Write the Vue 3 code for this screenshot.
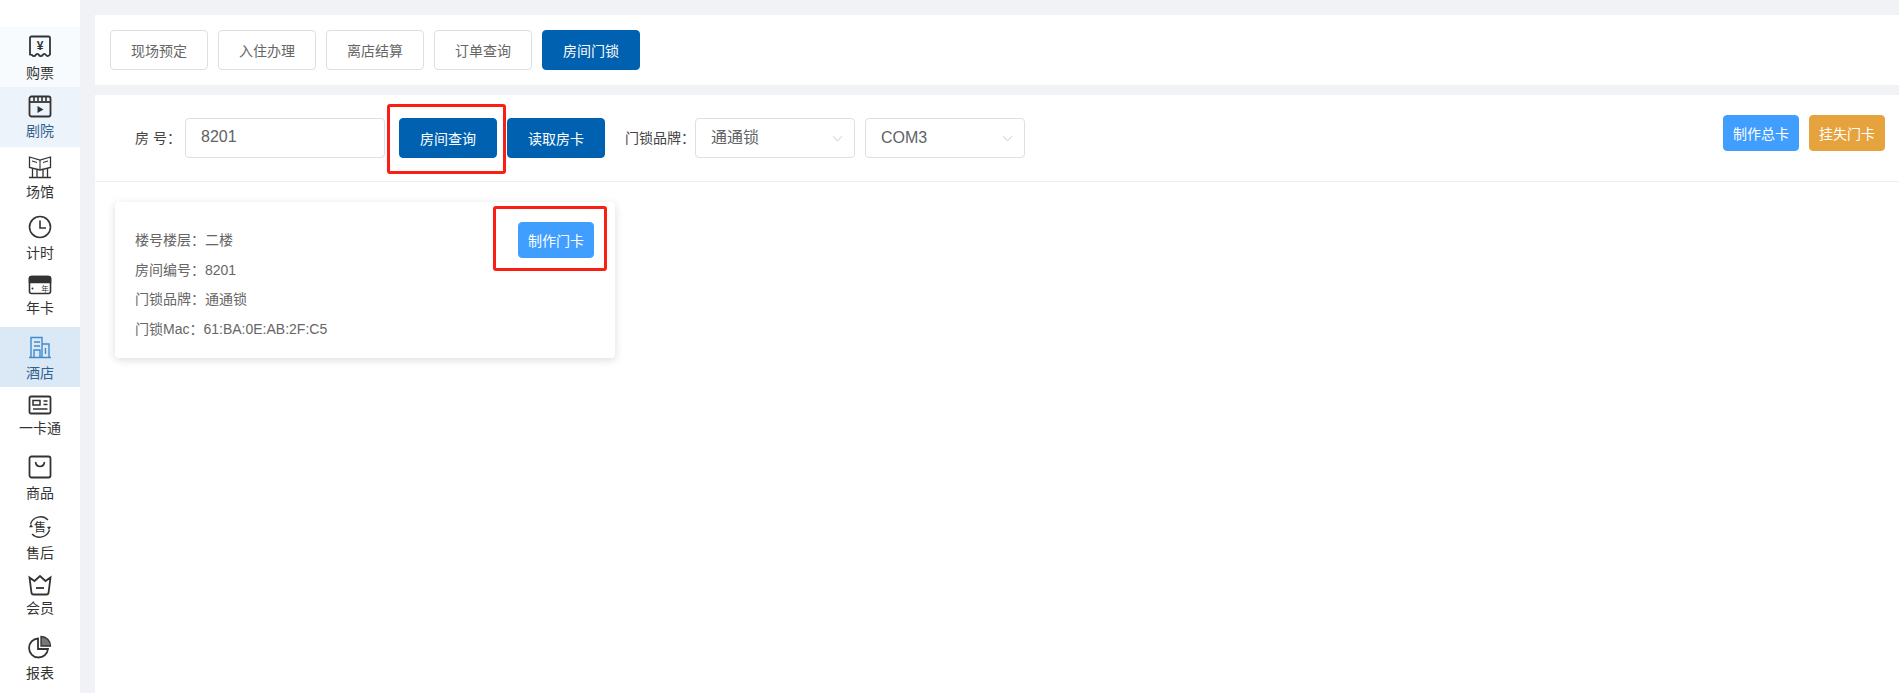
<script setup>
const nav = [
  { label: '购票', icon: 'ticket', drop: 4, tone: 'soft' },
  { label: '剧院', icon: 'film', drop: 2, tone: 'mid' },
  { label: '场馆', icon: 'venue', drop: 3, tone: '' },
  { label: '计时', icon: 'clock', drop: 4, tone: '' },
  { label: '年卡', icon: 'card', drop: -1, tone: '' },
  { label: '酒店', icon: 'hotel', drop: 4, tone: 'active' },
  { label: '一卡通', icon: 'idcard', drop: -1, tone: '' },
  { label: '商品', icon: 'bag', drop: 4, tone: '' },
  { label: '售后', icon: 'after', drop: 4, tone: '' },
  { label: '会员', icon: 'crown', drop: -1, tone: '' },
  { label: '报表', icon: 'pie', drop: 4, tone: '' }
]
const tabs = ['现场预定', '入住办理', '离店结算', '订单查询', '房间门锁']
</script>

<template>
  <div class="page">
    <aside class="side">
      <div
        v-for="item in nav"
        :key="item.label"
        class="nav-item"
        :class="item.tone"
      >
        <svg class="ico" viewBox="0 0 24 24" fill="none" stroke="currentColor" stroke-width="1.6">
          <template v-if="item.icon === 'ticket'">
            <path d="M2 3a1.500 1.500 0 0 1 1.500-1.500h17A1.500 1.500 0 0 1 22 3v16.500c-1.500 2-3 2-4 .5s-2.500-1.500-3.300 0-3 1.500-3.700 0-2.500-1.500-3.300 0-2.700 1.500-3.700 0L2 19.500z" stroke-width="1.800" />
            <text class="glyph bold" x="12" y="15" font-size="12" text-anchor="middle">¥</text>
          </template>
          <template v-else-if="item.icon === 'film'">
            <rect x="1.500" y="1.500" width="21" height="20" rx="2" stroke-width="1.800" />
            <path d="M1.500 7h21" stroke-width="1.800" />
            <path d="M6 2v4M10 2v4M14 2v4M18 2v4" stroke-width="1.600" />
            <path d="M9.500 11l6 3.500-6 3.500z" fill="currentColor" stroke="none" />
          </template>
          <template v-else-if="item.icon === 'venue'">
            <path d="M1.500 2l10.500 3 10.500-3v10.500L12 15 1.500 12.500z" stroke-width="1.300" />
            <path d="M12 5v10M4 6l5 1.500M15 7.500L20 6" stroke-width="1.100" />
            <path d="M4.500 13v9M9 15v7M15 15v7M19.500 13v9M1 22.500h22" stroke-width="1.300" />
          </template>
          <template v-else-if="item.icon === 'clock'">
            <circle cx="12" cy="12" r="10.500" />
            <path d="M12 5.500V13h6" />
          </template>
          <template v-else-if="item.icon === 'card'">
            <rect x="1.500" y="1.500" width="21" height="17" rx="2" />
            <path d="M1.500 3a2 2 0 0 1 2-1.500h17a2 2 0 0 1 2 1.500v4.500h-21z" fill="currentColor" />
            <circle cx="4.500" cy="13.500" r="1" fill="currentColor" stroke="none" />
            <text class="glyph" x="17" y="16.500" font-size="7.500" text-anchor="middle">年</text>
          </template>
          <template v-else-if="item.icon === 'hotel'">
            <path d="M3 22V2.500h11V22M14 9h7v13M1 22.500h22" stroke-width="1.400" />
            <path d="M6 7h6M6 11h6M6 22v-7h6v7M17.500 13v6" stroke-width="1.400" />
          </template>
          <template v-else-if="item.icon === 'idcard'">
            <rect x="1.500" y="1.500" width="21" height="17" rx="1.500" stroke-width="1.800" />
            <rect x="5" y="5.500" width="7" height="4.500" stroke-width="1.500" />
            <path d="M15.500 6h4M15.500 9.500h4M5 14h14.500" stroke-width="1.700" />
          </template>
          <template v-else-if="item.icon === 'bag'">
            <path d="M3.500 1.500h17a2 2 0 0 1 2 2v17a2 2 0 0 1-2 2h-17a2 2 0 0 1-2-2v-17a2 2 0 0 1 2-2z" stroke-width="1.800" />
            <path d="M7.500 7c.5 3 2.300 4.500 4.500 4.500S16 10 16.500 7" stroke-width="1.600" />
          </template>
          <template v-else-if="item.icon === 'after'">
            <path d="M2.500 9A10.500 10.500 0 0 1 20 5M21.500 15A10.500 10.500 0 0 1 4 19" stroke-width="1.300" />
            <path d="M1.500 12L3 9.500 4.500 12zM22.500 12L21 14.500 19.500 12z" fill="currentColor" stroke-width=".6" />
            <text class="glyph" x="12" y="16.500" font-size="12" text-anchor="middle">售</text>
          </template>
          <template v-else-if="item.icon === 'crown'">
            <path d="M1.500 2.500l5 3.500L12 1l5.500 5 5-3.500-2 15.500a2 2 0 0 1-2 1.500h-13a2 2 0 0 1-2-1.500z" stroke-width="1.800" />
            <path d="M8 13h8" stroke-width="1.800" />
          </template>
          <template v-else>
            <path d="M10 3.500a9.500 9.500 0 1 0 10 10.500H10z" stroke-width="1.800" />
            <path d="M13 1.500a9.500 9.500 0 0 1 9.500 9.500H13z" fill="#777" stroke-width="1.300" />
          </template>
        </svg>
        <span class="nav-label" :style="{ marginTop: item.drop + 'px' }">{{ item.label }}</span>
      </div>
    </aside>

    <main class="main">
      <section class="tabs">
        <button
          v-for="(tab, i) in tabs"
          :key="tab"
          class="btn tab"
          :class="{ primary: i === 4 }"
        >{{ tab }}</button>
      </section>

      <section class="panel">
        <header class="toolbar">
          <span class="label room-label">房 号：</span>
          <div class="field room-field">8201</div>
          <span class="mark mark-query"><button class="btn primary wide">房间查询</button></span>
          <button class="btn primary wide read">读取房卡</button>
          <span class="label brand-label">门锁品牌：</span>
          <div class="field select">
            <span>通通锁</span>
            <svg class="chev" viewBox="0 0 12 7" fill="none" stroke="currentColor"><path d="M1 1l5 5 5-5" /></svg>
          </div>
          <div class="field select">
            <span>COM3</span>
            <svg class="chev" viewBox="0 0 12 7" fill="none" stroke="currentColor"><path d="M1 1l5 5 5-5" /></svg>
          </div>
          <div class="actions">
            <button class="btn small blue">制作总卡</button>
            <button class="btn small orange">挂失门卡</button>
          </div>
        </header>

        <div class="body">
          <article class="room-card">
            <div class="lines">
              <div>楼号楼层：二楼</div>
              <div>房间编号：8201</div>
              <div>门锁品牌：通通锁</div>
              <div>门锁Mac：61:BA:0E:AB:2F:C5</div>
            </div>
            <span class="mark mark-card"><button class="btn small blue">制作门卡</button></span>
          </article>
        </div>
      </section>
    </main>
  </div>
</template>

<style>
html, body { margin: 0; background: #f0f2f6; overflow: hidden; }
</style>

<style scoped>
.page {
  display: flex;
  width: 1899px;
  height: 693px;
  overflow: hidden;
  background: #f0f2f6;
  font-family: "Liberation Sans", "Noto Sans CJK SC", sans-serif;
}
.side {
  width: 80px;
  flex: none;
  padding-top: 27px;
  box-sizing: border-box;
  background: #fff;
}
.nav-item {
  height: 60px;
  box-sizing: border-box;
  display: flex;
  flex-direction: column;
  align-items: center;
  padding-top: 8px;
  color: #333;
}
.nav-item.soft { background: #f7fbfe; }
.nav-item.mid { background: #ecf3fa; }
.nav-item.active { background: #dbe8f6; }
.nav-item.active .ico { color: #3f8ccb; }
.nav-item.active .nav-label,
.nav-item.mid .nav-label { color: #33618f; }
.ico { width: 24px; height: 24px; flex: none; }
.glyph { fill: currentColor; stroke: none; }
.glyph.bold { font-weight: 700; }
.nav-label { font-size: 14px; line-height: 20px; white-space: nowrap; }

.main {
  flex: 1;
  margin-left: 15px;
  padding-top: 15px;
  display: flex;
  flex-direction: column;
  gap: 10px;
  min-width: 0;
}
.tabs {
  height: 70px;
  box-sizing: border-box;
  padding: 15px;
  display: flex;
  gap: 10px;
  background: #fff;
}
.btn {
  box-sizing: border-box;
  border: 1px solid transparent;
  border-radius: 4px;
  padding: 0;
  font-family: inherit;
  font-size: 14px;
  white-space: nowrap;
}
.tab {
  width: 98px;
  height: 40px;
  border-color: #dcdfe6;
  background: #fff;
  color: #666;
}
.btn.primary {
  background: #0061b0;
  border-color: #0061b0;
  color: #fff;
}
.panel { flex: 1; background: #fff; }
.toolbar {
  height: 87px;
  box-sizing: border-box;
  border-bottom: 1px solid #eeeff2;
  padding: 23px 14px 0 0;
  display: flex;
  align-items: flex-start;
}
.label {
  font-size: 14px;
  line-height: 40px;
  color: #444;
  white-space: nowrap;
}
.room-label { margin-left: 40px; width: 50px; }
.brand-label { margin-left: 20px; width: 70px; }
.field {
  box-sizing: border-box;
  height: 40px;
  border: 1px solid #dcdfe6;
  border-radius: 4px;
  line-height: 36px;
  color: #606266;
  font-size: 16px;
}
.room-field { width: 200px; padding-left: 15px; }
.wide { width: 98px; height: 40px; flex: none; }
.read { margin-left: 1px; }
.select {
  width: 160px;
  margin-right: 10px;
  padding: 0 11px 0 15px;
  display: flex;
  align-items: center;
  justify-content: space-between;
}
.chev { width: 11px; height: 7px; color: #c0c4cc; }
.actions {
  margin-left: auto;
  margin-top: -3px;
  display: flex;
  gap: 10px;
}
.small { width: 76px; height: 36px; color: #fff; flex: none; }
.small.blue { background: #409eff; border-color: #409eff; }
.small.orange { background: #e6a23c; border-color: #e6a23c; }
.mark {
  box-sizing: border-box;
  border: 3px solid #fa1e14;
  border-radius: 3px;
  display: flex;
  align-items: flex-start;
}
.mark-query {
  width: 119px;
  height: 70px;
  margin: -14px 0 0 2px;
  padding: 11px 0 0 9px;
}
.body { padding: 20px; }
.room-card {
  position: relative;
  width: 500px;
  height: 156px;
  box-sizing: border-box;
  padding: 24px 20px;
  border-radius: 4px;
  background: #fff;
  box-shadow: 0 2px 8px rgba(0, 0, 0, 0.14);
}
.lines { font-size: 14px; line-height: 29.6px; color: #666; white-space: nowrap; }
.mark-card {
  position: absolute;
  left: 378px;
  top: 4px;
  width: 114px;
  height: 65px;
  padding: 13px 0 0 22px;
}
</style>
